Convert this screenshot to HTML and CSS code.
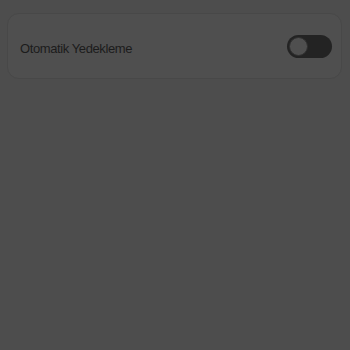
FILE: index.html
```html
<!DOCTYPE html>
<html lang="tr">
<head>
<meta charset="utf-8">
<link rel="stylesheet" href="styles.css">
</head>
<body>
<div class="page">
  <div class="card">
    <span class="label">Otomatik Yedekleme</span>
    <span class="toggle"><span class="thumb"></span></span>
  </div>
</div>
</body>
</html>
```

FILE: styles.css
```css
html, body {
  margin: 0;
  padding: 0;
  background: #4d4d4d;
  width: 350px;
  height: 350px;
  overflow: hidden;
  font-family: "Liberation Sans", Arial, sans-serif;
}
.page {
  padding: 13px 8px 0 7px;
}
.card {
  display: flex;
  align-items: center;
  justify-content: space-between;
  height: 66px;
  padding: 0 9px 0 12px;
  border: 1px solid #484848;
  border-radius: 12px;
  background: #4f4f4f;
  box-sizing: border-box;
}
.label {
  font-size: 13px;
  letter-spacing: -0.4px;
  color: #1c1c1c;
  padding-top: 5px;
}
.toggle {
  display: flex;
  align-items: center;
  width: 45px;
  height: 23px;
  border-radius: 12px;
  background: #232323;
  box-sizing: border-box;
  padding: 2px;
}
.thumb {
  width: 19px;
  height: 19px;
  border-radius: 50%;
  background: #4f4f4f;
  box-sizing: border-box;
  border: 1px solid #303030;
}
```
